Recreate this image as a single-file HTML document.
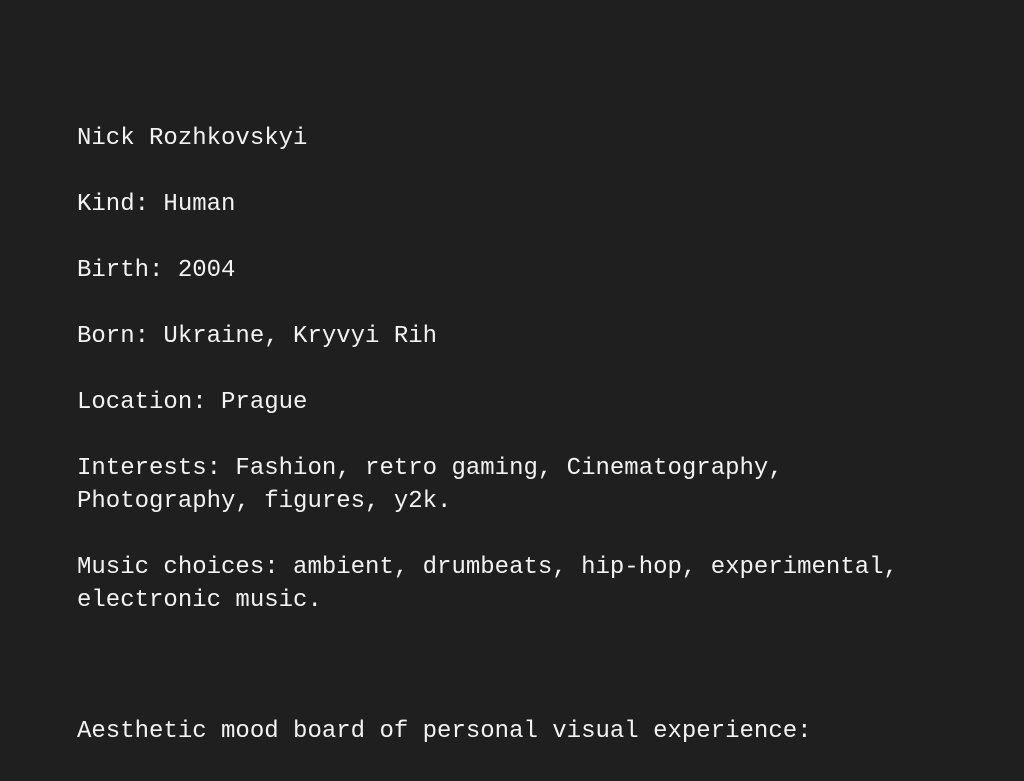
<!DOCTYPE html>
<html><head><meta charset="utf-8"><style>
html,body{margin:0;padding:0;background:#1f1f1f;width:1024px;height:768px;overflow:hidden}
body{font-family:"Liberation Mono",monospace;font-size:24px;line-height:33px;color:#f2f2f2}
.w{position:absolute;left:77px;top:122px;width:880px}
p{margin:0 0 33px 0;white-space:nowrap}
</style></head><body><div class="w">
<p>Nick Rozhkovskyi</p>
<p>Kind: Human</p>
<p>Birth: 2004</p>
<p>Born: Ukraine, Kryvyi Rih</p>
<p>Location: Prague</p>
<p>Interests: Fashion, retro gaming, Cinematography,<br>Photography, figures, y2k.</p>
<p>Music choices: ambient, drumbeats, hip-hop, experimental,<br>electronic music.</p>
<p style="margin-top:98px">Aesthetic mood board of personal visual experience:</p>
</div></body></html>
